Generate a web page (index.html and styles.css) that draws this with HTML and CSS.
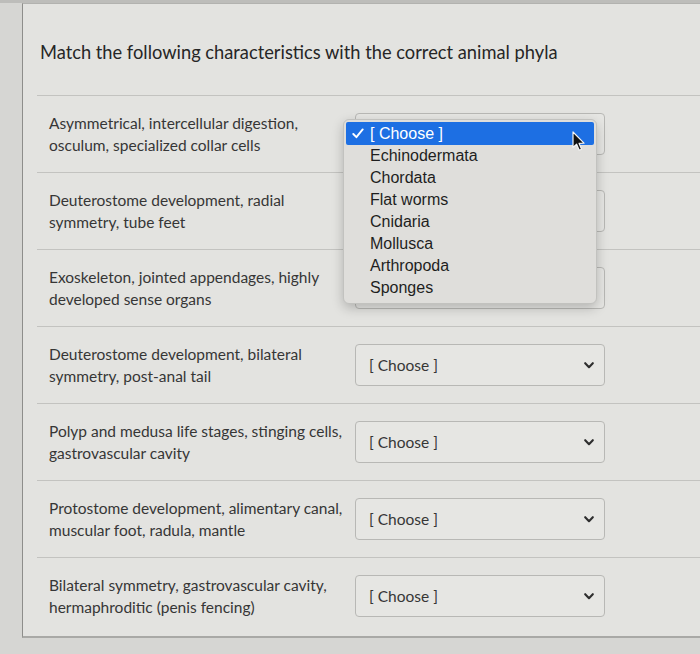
FILE: index.html
```html
<!DOCTYPE html>
<html lang="en">
<head>
<meta charset="utf-8">
<title>Match the following characteristics</title>
<link rel="stylesheet" href="styles.css">
</head>
<body>
<div class="topstrip"></div>
<div class="panel">
  <div class="header">
    <h1 class="title">Match the following characteristics with the correct animal phyla</h1>
  </div>
  <div class="rows">
    <div class="row">
      <div class="prompt">Asymmetrical, intercellular digestion, osculum, specialized collar cells</div>
      <div class="select-wrap">
        <div class="select"><span></span><svg class="chev" viewBox="0 0 10 7" width="10" height="7"><path d="M1.2 1.2 L5 5.2 L8.8 1.2" fill="none" stroke="#2e2e2e" stroke-width="2.1" stroke-linecap="round" stroke-linejoin="round"/></svg></div>
        <div class="menu">
          <div class="opt opt-on"><svg class="check" viewBox="0 0 12 11" width="12" height="11"><path d="M1.3 6 L4.4 9.2 L10.7 1.4" fill="none" stroke="#fff" stroke-width="1.9" stroke-linecap="round" stroke-linejoin="round"/></svg>[ Choose ]</div>
          <div class="opt">Echinodermata</div>
          <div class="opt">Chordata</div>
          <div class="opt">Flat worms</div>
          <div class="opt">Cnidaria</div>
          <div class="opt">Mollusca</div>
          <div class="opt">Arthropoda</div>
          <div class="opt">Sponges</div>
        </div>
        <svg class="cursor" viewBox="0 0 14 21" width="14" height="21"><path d="M1 1 L1 16.5 L4.6 13.2 L7.2 19.3 L9.6 18.3 L7.1 12.4 L12 12.2 Z" fill="#111" stroke="#f4f4f4" stroke-width="1.2" stroke-linejoin="round"/></svg>
      </div>
    </div>
    <div class="row">
      <div class="prompt">Deuterostome development, radial symmetry, tube feet</div>
      <div class="select"><span></span><svg class="chev" viewBox="0 0 10 7" width="10" height="7"><path d="M1.2 1.2 L5 5.2 L8.8 1.2" fill="none" stroke="#2e2e2e" stroke-width="2.1" stroke-linecap="round" stroke-linejoin="round"/></svg></div>
    </div>
    <div class="row">
      <div class="prompt">Exoskeleton, jointed appendages, highly developed sense organs</div>
      <div class="select"><span></span><svg class="chev" viewBox="0 0 10 7" width="10" height="7"><path d="M1.2 1.2 L5 5.2 L8.8 1.2" fill="none" stroke="#2e2e2e" stroke-width="2.1" stroke-linecap="round" stroke-linejoin="round"/></svg></div>
    </div>
    <div class="row">
      <div class="prompt">Deuterostome development, bilateral symmetry, post-anal tail</div>
      <div class="select"><span>[ Choose ]</span><svg class="chev" viewBox="0 0 10 7" width="10" height="7"><path d="M1.2 1.2 L5 5.2 L8.8 1.2" fill="none" stroke="#2e2e2e" stroke-width="2.1" stroke-linecap="round" stroke-linejoin="round"/></svg></div>
    </div>
    <div class="row">
      <div class="prompt">Polyp and medusa life stages, stinging cells, gastrovascular cavity</div>
      <div class="select"><span>[ Choose ]</span><svg class="chev" viewBox="0 0 10 7" width="10" height="7"><path d="M1.2 1.2 L5 5.2 L8.8 1.2" fill="none" stroke="#2e2e2e" stroke-width="2.1" stroke-linecap="round" stroke-linejoin="round"/></svg></div>
    </div>
    <div class="row">
      <div class="prompt">Protostome development, alimentary canal, muscular foot, radula, mantle</div>
      <div class="select"><span>[ Choose ]</span><svg class="chev" viewBox="0 0 10 7" width="10" height="7"><path d="M1.2 1.2 L5 5.2 L8.8 1.2" fill="none" stroke="#2e2e2e" stroke-width="2.1" stroke-linecap="round" stroke-linejoin="round"/></svg></div>
    </div>
    <div class="row">
      <div class="prompt">Bilateral symmetry, gastrovascular cavity, hermaphroditic (penis fencing)</div>
      <div class="select"><span>[ Choose ]</span><svg class="chev" viewBox="0 0 10 7" width="10" height="7"><path d="M1.2 1.2 L5 5.2 L8.8 1.2" fill="none" stroke="#2e2e2e" stroke-width="2.1" stroke-linecap="round" stroke-linejoin="round"/></svg></div>
    </div>
  </div>
</div>
</body>
</html>
```
FILE: styles.css
```css
html, body {
  margin: 0;
  padding: 0;
}
body {
  width: 700px;
  height: 654px;
  overflow: hidden;
  background: #d6d6d3;
  font-family: Lato, "Liberation Sans", sans-serif;
  color: #343434;
}
.topstrip {
  height: 3px;
  background: #bdbdba;
}
.panel {
  margin-left: 22px;
  height: 635px;
  box-sizing: border-box;
  background: #e3e3e0;
  border-left: 1px solid #8e8e8b;
  border-top: 1px solid #b2b2af;
  border-bottom: 2px solid #a9a9a6;
}
.header {
  padding: 36px 0 31px 17px;
}
.title {
  margin: 0;
  font-size: 18.3px;
  line-height: 24px;
  font-weight: 400;
  color: #262626;
}
.rows {
  margin-left: 14px;
}
.row {
  display: grid;
  grid-template-columns: 306px 250px;
  align-items: center;
  padding: 16px 0 16px 12px;
  border-top: 1px solid #c3c3c0;
}
.prompt {
  width: 300px;
  font-size: 15.5px;
  line-height: 22px;
  color: #363636;
}
.select-wrap {
  position: relative;
}
.select {
  height: 42px;
  box-sizing: border-box;
  border: 1px solid #b8b8b5;
  border-radius: 4px;
  background: #e6e6e3;
  display: flex;
  align-items: center;
  justify-content: space-between;
  padding: 0 10px 0 13px;
  font-size: 15.5px;
  color: #363636;
}
.chev {
  display: block;
}
.menu {
  position: absolute;
  left: -12px;
  top: 6px;
  width: 254px;
  box-sizing: border-box;
  padding: 2px 2px 4px;
  background: #dfdedb;
  border: 1px solid #c2c2bf;
  border-radius: 6px;
  box-shadow: 0 4px 12px rgba(0, 0, 0, 0.22);
  font-family: "Liberation Sans", Arial, sans-serif;
  font-size: 16px;
  color: #1e1e1e;
}
.opt {
  height: 22px;
  line-height: 22px;
  padding-left: 24px;
  position: relative;
}
.opt-on {
  height: 23px;
  line-height: 23px;
  background: #1d6fe3;
  color: #fff;
  border-radius: 2px;
}
.check {
  position: absolute;
  left: 6px;
  top: 6px;
}
.cursor {
  position: absolute;
  left: 217px;
  top: 18px;
}
```
